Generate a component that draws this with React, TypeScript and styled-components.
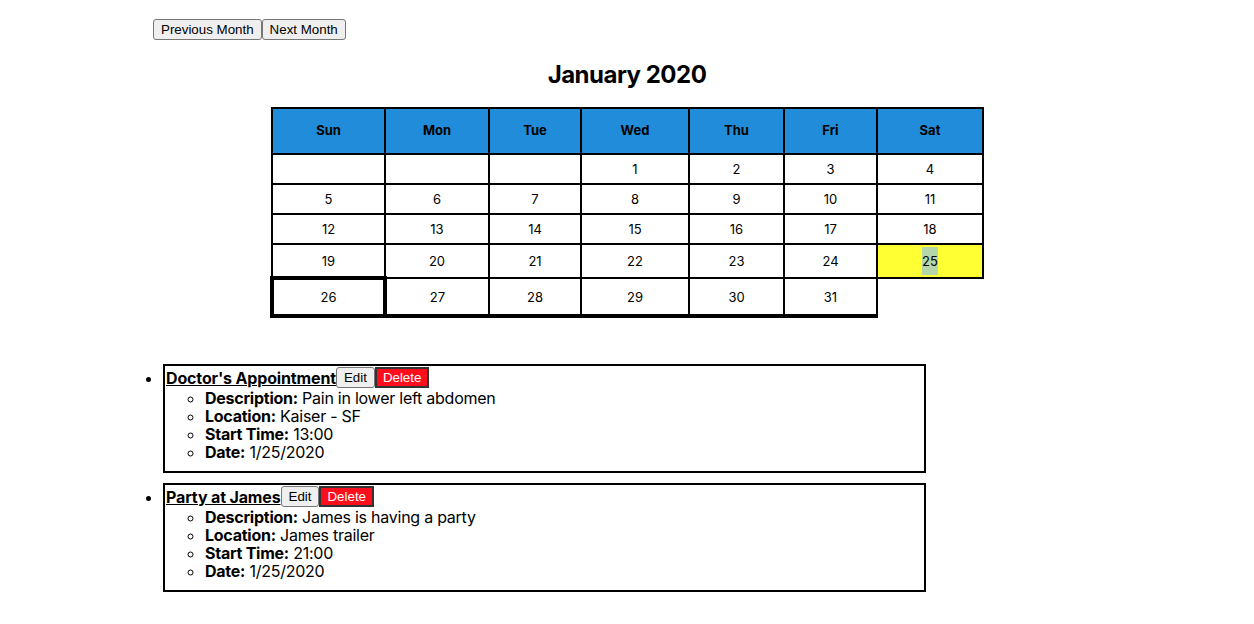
import React from "react";
import styled, { createGlobalStyle } from "styled-components";

const GlobalStyle = createGlobalStyle`
  body {
    margin: 8px;
    background: #ffffff;
    color: #000000;
    font-family: Inter, "Noto Sans", sans-serif;
  }
`;

const Toolbar = styled.div`
  display: flex;
  padding: 11px 0 0 145px;
`;

const Button = styled.button`
  font: 13.333px "Liberation Sans", Arial, sans-serif;
  height: 21px;
  margin: 0;
  padding: 1px 7px;
  color: #000;
  background: #efefef;
  border: 1px solid #767676;
  border-radius: 3px;
  cursor: pointer;
`;

const DeleteButton = styled(Button)`
  background: #ff0d1d;
  color: #ffffff;
  border: 2px solid #333333;
  border-radius: 0;
  padding: 1px 6px;
`;

const MonthTitle = styled.h2`
  margin: 20px 0 18px;
  text-align: center;
  font-size: 24px;
  line-height: 29px;
  font-weight: 700;
  letter-spacing: -0.5px;
`;

const Calendar = styled.table`
  margin: 0 auto;
  width: 713px;
  table-layout: fixed;
  border-collapse: collapse;
  font-size: 13px;
  line-height: 16px;
`;

const HeadCell = styled.th`
  background: #218dda;
  border: 2px solid #000;
  padding: 13px 0 15px;
  font-weight: 700;
  text-align: center;
`;

const DayCell = styled.td<{
  $selected?: boolean;
  $today?: boolean;
  $lastRow?: boolean;
}>`
  border: ${(p) => (p.$today ? "4px" : "2px")} solid #000;
  border-bottom-width: ${(p) => (p.$lastRow || p.$today ? "4px" : "2px")};
  padding: ${(p) => (p.$selected ? "2px 0" : p.$lastRow ? "9px 0" : "6px 0")};
  text-align: center;
  background: ${(p) => (p.$selected ? "#ffff33" : "transparent")};
`;

const DayMark = styled.span`
  display: inline-block;
  padding: 6px 0;
  background: #b5d6a9;
`;

const EventList = styled.ul`
  margin: 46px 0 0 115px;
  padding-left: 40px;
  font-size: 16px;
`;

const EventItem = styled.li`
  box-sizing: border-box;
  width: 763px;
  margin-bottom: 10px;
  padding: 0 0 10px;
  border: 2px solid #000;
`;

const TitleRow = styled.div`
  display: flex;
  align-items: center;
  height: 23px;
  padding-left: 1px;
`;

const EventTitle = styled.span`
  font-weight: 700;
  text-decoration: underline;
  letter-spacing: -0.15px;
`;

const DetailList = styled.ul`
  margin: 0;
  padding-left: 40px;
  list-style: circle;
  line-height: 18px;
  letter-spacing: -0.25px;
`;

const Label = styled.b`
  font-weight: 700;
`;

const days = ["Sun", "Mon", "Tue", "Wed", "Thu", "Fri", "Sat"];
const colWidths = [113, 104, 92, 108, 95, 93, 106];

const weeks: (number | null)[][] = [
  [null, null, null, 1, 2, 3, 4],
  [5, 6, 7, 8, 9, 10, 11],
  [12, 13, 14, 15, 16, 17, 18],
  [19, 20, 21, 22, 23, 24, 25],
  [26, 27, 28, 29, 30, 31],
];

const events = [
  {
    title: "Doctor's Appointment",
    description: "Pain in lower left abdomen",
    location: "Kaiser - SF",
    start: "13:00",
    date: "1/25/2020",
  },
  {
    title: "Party at James",
    description: "James is having a party",
    location: "James trailer",
    start: "21:00",
    date: "1/25/2020",
  },
];

const SELECTED = 25;
const TODAY = 26;

export default function App() {
  return (
    <>
      <GlobalStyle />
      <Toolbar>
        <Button>Previous Month</Button>
        <Button>Next Month</Button>
      </Toolbar>
      <MonthTitle>January 2020</MonthTitle>
      <Calendar>
        <colgroup>
          {colWidths.map((w, i) => (
            <col key={i} style={{ width: w }} />
          ))}
        </colgroup>
        <thead>
          <tr>
            {days.map((d) => (
              <HeadCell key={d}>{d}</HeadCell>
            ))}
          </tr>
        </thead>
        <tbody>
          {weeks.map((week, wi) => (
            <tr key={wi}>
              {week.map((day, di) => (
                <DayCell
                  key={di}
                  $selected={day === SELECTED}
                  $today={day === TODAY}
                  $lastRow={wi === weeks.length - 1}
                >
                  {day === SELECTED ? <DayMark>{day}</DayMark> : day ?? ""}
                </DayCell>
              ))}
            </tr>
          ))}
        </tbody>
      </Calendar>
      <EventList>
        {events.map((ev) => (
          <EventItem key={ev.title}>
            <TitleRow>
              <EventTitle>{ev.title}</EventTitle>
              <Button>Edit</Button>
              <DeleteButton>Delete</DeleteButton>
            </TitleRow>
            <DetailList>
              <li>
                <Label>Description:</Label> {ev.description}
              </li>
              <li>
                <Label>Location:</Label> {ev.location}
              </li>
              <li>
                <Label>Start Time:</Label> {ev.start}
              </li>
              <li>
                <Label>Date:</Label> {ev.date}
              </li>
            </DetailList>
          </EventItem>
        ))}
      </EventList>
    </>
  );
}
